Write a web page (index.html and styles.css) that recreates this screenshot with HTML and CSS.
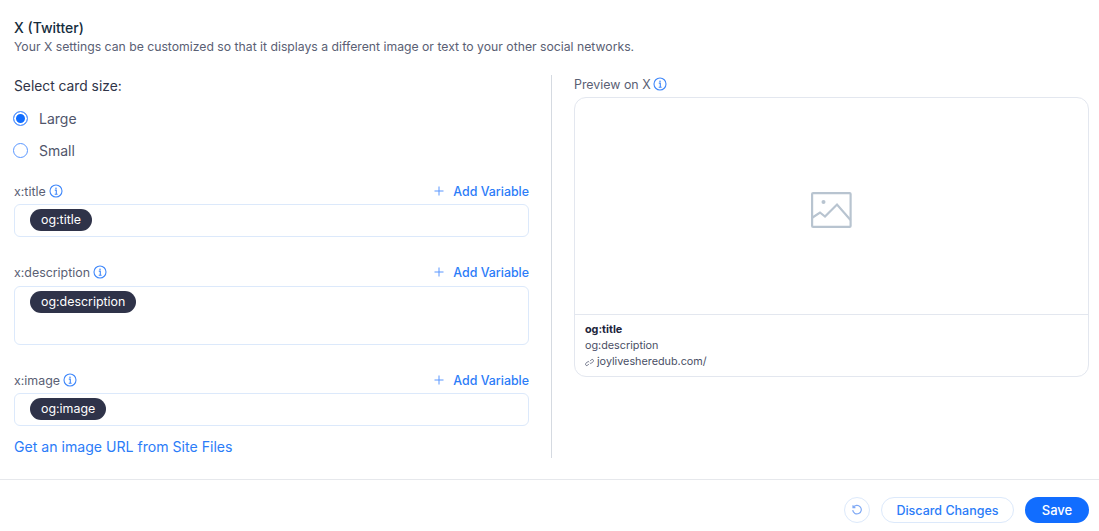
FILE: index.html
```html
<!DOCTYPE html>
<html lang="en">
<head>
<meta charset="utf-8">
<title>X (Twitter) settings</title>
<link rel="stylesheet" href="styles.css">
</head>
<body>
<svg class="defs" width="0" height="0" aria-hidden="true">
  <symbol id="info" viewBox="0 0 14 14">
    <circle cx="7" cy="7" r="6" fill="none" stroke="currentColor" stroke-width="1.1"/>
    <circle cx="7" cy="4.2" r=".8" fill="currentColor"/>
    <path d="M5.8 6.1H7.3V10M5.7 10.2H8.6" fill="none" stroke="currentColor" stroke-width="1.1"/>
  </symbol>
  <symbol id="plus" viewBox="0 0 10 10">
    <path d="M5 .5V9.5M.5 5H9.5" fill="none" stroke="currentColor" stroke-width="1"/>
  </symbol>
</svg>
<main class="content">
  <header class="intro">
    <h1 class="title">X (Twitter)</h1>
    <p class="subtitle">Your X settings can be customized so that it displays a different image or text to your other social networks.</p>
  </header>
  <div class="columns">
    <section class="form">
      <div class="size-label">Select card size:</div>
      <div class="radio-row"><span class="radio radio-on"></span><span>Large</span></div>
      <div class="radio-row radio-row-2"><span class="radio"></span><span>Small</span></div>

      <div class="field-head head-title">
        <span class="field-name">x:title <svg class="info"><use href="#info"/></svg></span>
        <span class="add"><svg class="plus"><use href="#plus"/></svg>Add Variable</span>
      </div>
      <div class="box"><span class="chip">og:title</span></div>

      <div class="field-head head-desc">
        <span class="field-name">x:description <svg class="info"><use href="#info"/></svg></span>
        <span class="add"><svg class="plus"><use href="#plus"/></svg>Add Variable</span>
      </div>
      <div class="box box-tall"><span class="chip">og:description</span></div>

      <div class="field-head head-image">
        <span class="field-name">x:image <svg class="info"><use href="#info"/></svg></span>
        <span class="add"><svg class="plus"><use href="#plus"/></svg>Add Variable</span>
      </div>
      <div class="box"><span class="chip">og:image</span></div>

      <a class="site-files">Get an image URL from Site Files</a>
    </section>
    <div class="divider"></div>
    <section class="preview">
      <div class="preview-label">Preview on X <svg class="info"><use href="#info"/></svg></div>
      <div class="card">
        <div class="card-image">
          <svg class="placeholder" viewBox="0 0 42 37" fill="none" stroke="#b8c4d0" stroke-width="2.2">
            <rect x="1.1" y="1.1" width="38.500" height="33.800" rx="1"/>
            <path d="M1.500 25.500L9 20.500L14 24.500L26 12.500L39.500 28"/>
            <circle cx="12.500" cy="10" r="2" fill="#b8c4d0" stroke="none"/>
          </svg>
        </div>
        <div class="card-text">
          <div class="card-title">og:title</div>
          <div class="card-line">og:description</div>
          <div class="card-line card-url">
            <svg class="link" viewBox="0 0 10 10" fill="none" stroke="#6f7489" stroke-width="1.100">
              <path d="M4.200 6.800L3 8a1.400 1.400 0 0 1-2-2l1.600-1.600a1.400 1.400 0 0 1 2 0M5.800 3.200L7 2a1.400 1.400 0 0 1 2 2L7.400 5.600a1.400 1.400 0 0 1-2 0"/>
            </svg>joylivesheredub.com/
          </div>
        </div>
      </div>
    </section>
  </div>
</main>
<footer class="actions">
  <button class="btn-icon" aria-label="Reset">
    <svg viewBox="0 0 12 12" fill="none" stroke="#7fa9f5" stroke-width="1.200">
      <path d="M2.300 3.400A4.300 4.300 0 1 1 1.700 6.200M2 1.200V3.600H4.400"/>
    </svg>
  </button>
  <button class="btn-outline">Discard Changes</button>
  <button class="btn-primary">Save</button>
</footer>
</body>
</html>
```
FILE: styles.css
```css
* { box-sizing: border-box; }
html, body { margin: 0; height: 100%; }
body {
  background: #fff;
  font-family: Inter, "Noto Sans", sans-serif;
  color: #3b4057;
  overflow: hidden;
}
.defs { position: absolute; }
.content {
  height: 480px;
  padding: 19px 10px 0 14px;
  border-bottom: 1px solid #e6e8ec;
}
.title {
  margin: 0;
  font-size: 14px;
  line-height: 17px;
  font-weight: 500;
  color: #162d3d;
}
.subtitle {
  margin: 2px 0 0;
  font-size: 12.220px;
  line-height: 17px;
  color: #5a6074;
}
.columns { display: flex; margin-top: 20px; }
.form { width: 515px; flex: none; display: flex; flex-direction: column; }
.size-label { margin-top: 2px; font-size: 13.800px; line-height: 18px; color: #2f3448; }
.radio-row {
  display: flex;
  align-items: center;
  gap: 11px;
  margin-top: 14px;
  margin-left: -1px;
  height: 18px;
  font-size: 14px;
  color: #50556b;
}
.radio-row-2 { margin-top: 14px; }
.radio {
  width: 15px;
  height: 15px;
  border-radius: 50%;
  border: 1px solid #5a97ff;
  background: #fff;
  flex: none;
}
.radio-on { background: #116dff; box-shadow: inset 0 0 0 2px #fff; }
.field-head {
  display: flex;
  justify-content: space-between;
  align-items: center;
  height: 18px;
  font-size: 12.400px;
  color: #5a6074;
}
.head-title { margin-top: 23px; }
.head-desc { margin-top: 26px; }
.head-image { margin-top: 26px; }
.field-name { display: flex; align-items: center; gap: 3px; }
.info { width: 14px; height: 14px; color: #3f87fa; flex: none; }
.add { display: flex; align-items: center; color: #2b7cf8; font-size: 12.400px; font-weight: 500; }
.plus { width: 10px; height: 10px; margin-right: 9px; color: #5a97ff; }
.box {
  margin-top: 4px;
  height: 33px;
  padding: 3px 15px;
  border: 1px solid #dce9fb;
  border-radius: 6px;
  background: #fff;
}
.box-tall { height: 59px; margin-top: 5px; }
.chip {
  display: inline-block;
  height: 22px;
  padding: 0 11px;
  border-radius: 11px;
  background: #2f3349;
  color: #fff;
  font-size: 12.400px;
  line-height: 22px;
}
.site-files {
  margin-top: 12px;
  font-size: 14.100px;
  line-height: 18px;
  color: #2b7cf8;
}
.divider {
  width: 1px;
  height: 383px;
  margin: 0 22px;
  background: #d5dae1;
  flex: none;
}
.preview { width: 515px; flex: none; }
.preview-label {
  display: flex;
  align-items: center;
  gap: 2px;
  height: 18px;
  font-size: 12.400px;
  color: #5a6074;
}
.card {
  margin-top: 4px;
  height: 280px;
  border: 1px solid #e3e7ef;
  border-radius: 12px;
  overflow: hidden;
}
.card-image {
  height: 217px;
  display: flex;
  align-items: center;
  justify-content: center;
  border-bottom: 1px solid #e3e7ef;
}
.placeholder { width: 42px; height: 37px; margin-top: 9px; }
.card-text { padding: 7px 10px 0; font-size: 10.800px; line-height: 16px; color: #4a4f66; }
.card-title { font-weight: 700; color: #20233a; }
.card-url { display: flex; align-items: center; gap: 3px; }
.link { width: 9px; height: 9px; flex: none; }
.actions {
  display: flex;
  justify-content: flex-end;
  align-items: center;
  height: 51px;
  padding: 9px 10px 0 0;
  gap: 11px;
}
button { font-family: inherit; cursor: pointer; }
.btn-icon {
  width: 26px;
  height: 26px;
  padding: 6px;
  border: 1px solid #dce9fb;
  border-radius: 50%;
  background: #fff;
  display: flex;
}
.btn-icon svg { width: 12px; height: 12px; }
.btn-outline {
  height: 26px;
  width: 133px;
  padding: 0;
  border: 1px solid #dce9fb;
  border-radius: 13px;
  background: #fff;
  color: #2b7cf8;
  font-size: 12.500px;
  font-weight: 500;
}
.btn-primary {
  height: 26px;
  width: 64px;
  padding: 0;
  border: 0;
  border-radius: 13px;
  background: #116dff;
  color: #fff;
  font-size: 13px;
  font-weight: 500;
}
```
